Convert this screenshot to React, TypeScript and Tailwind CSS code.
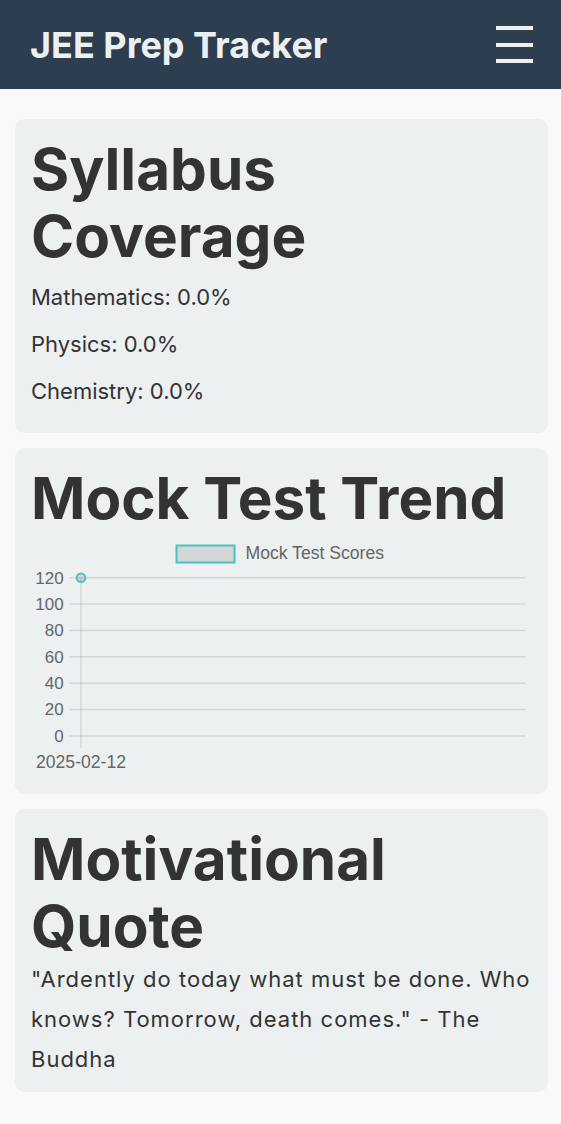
import React from "react";

const FONT = "'Liberation Sans', Arial, sans-serif";

const Chart = () => {
  const ys = [120, 100, 80, 60, 40, 20, 0];
  const top = 46.7;
  const step = 26.38;
  const ax = 66;
  return (
    <svg width="533" height="263" viewBox="0 0 533 263" className="block">
      <rect x={161.5} y={14.5} width="58" height="17" fill="rgba(0,0,0,0.1)" stroke="#4bc0c0" strokeWidth="2" />
      <text x={230.5} y={28} fontFamily={FONT} fontSize="17.6" fill="#666">Mock Test Scores</text>
      {ys.map((v, i) => {
        const y = top + step * i;
        return (
          <g key={v}>
            <line x1={54} x2={510.5} y1={y} y2={y} stroke="rgba(0,0,0,0.1)" strokeWidth="1.5" />
            <text x={48.7} y={y + 5.8} textAnchor="end" fontFamily={FONT} fontSize="17" fill="#666">{v}</text>
          </g>
        );
      })}
      <line x1={ax} x2={ax} y1={top} y2={217} stroke="rgba(0,0,0,0.1)" strokeWidth="1.5" />
      <text x={ax} y={237.3} textAnchor="middle" fontFamily={FONT} fontSize="17.6" fill="#666">2025-02-12</text>
      <circle cx={ax} cy={top} r="4.3" fill="rgba(0,0,0,0.1)" stroke="#4bc0c0" strokeWidth="2" />
    </svg>
  );
};

export default function App() {
  return (
    <div className="min-h-[1124px] bg-[#f8f9fa] text-[#333]" style={{ fontFamily: "Inter, 'Noto Sans', sans-serif" }}>
      <header className="h-[89px] bg-[#2c3e50] flex items-center justify-between pl-[30px] pr-[28px]">
        <h1 className="text-[36px] font-bold text-[#ecf0f1] leading-none">JEE Prep Tracker</h1>
        <div className="flex flex-col gap-[12.5px] w-[37px]">
          <div className="h-[4px] bg-[#ecf0f1]" />
          <div className="h-[4px] bg-[#ecf0f1]" />
          <div className="h-[4px] bg-[#ecf0f1]" />
        </div>
      </header>
      <main className="pl-[15px] pr-[13px] pt-[30px] pb-[32px] flex flex-col gap-[15px]">
        <section className="bg-[#ecf0f1] rounded-[10px] px-[16px] pt-[16px] pb-[26px]">
          <h2 className="text-[58.4px] font-bold leading-[67px]">Syllabus Coverage</h2>
          <div className="mt-[12px] flex flex-col gap-[15px] text-[22px] leading-[32px]">
            <p>Mathematics: 0.0%</p>
            <p>Physics: 0.0%</p>
            <p>Chemistry: 0.0%</p>
          </div>
        </section>
        <section className="bg-[#ecf0f1] rounded-[10px] pt-[16px]">
          <h2 className="px-[16px] text-[58.4px] font-bold leading-[67px]">Mock Test Trend</h2>
          <Chart />
        </section>
        <section className="bg-[#ecf0f1] rounded-[10px] px-[16px] pt-[16px] pb-[13px]">
          <h2 className="text-[58.4px] font-bold leading-[67px]">Motivational Quote</h2>
          <p className="text-[22px] leading-[40px] tracking-[1px]">"Ardently do today what must be done. Who knows? Tomorrow, death comes." - The Buddha</p>
        </section>
      </main>
    </div>
  );
}
